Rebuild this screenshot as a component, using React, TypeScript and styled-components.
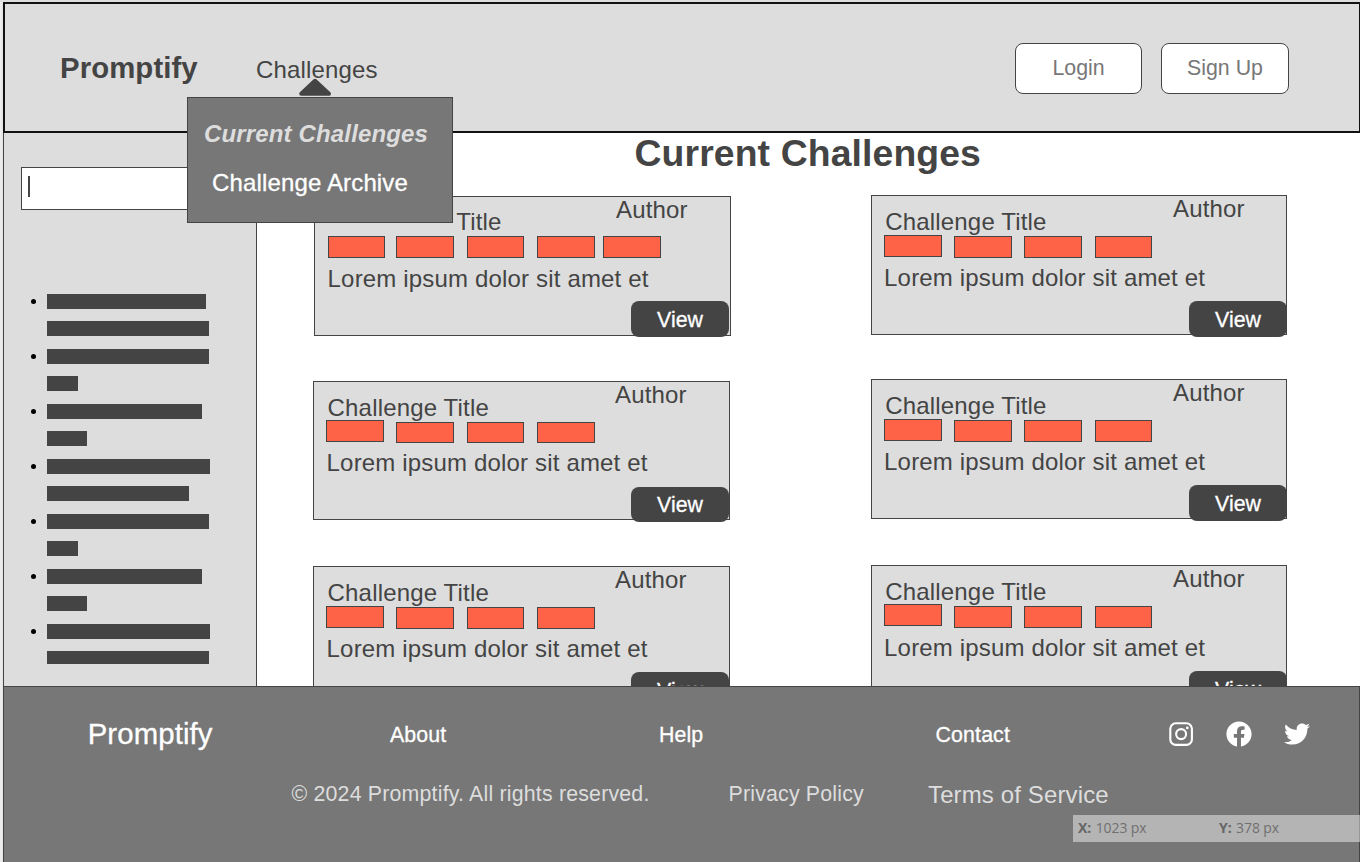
import React from "react";
import styled, { createGlobalStyle } from "styled-components";
import { FaFacebook, FaTwitter } from "react-icons/fa";

const ink = "#444444";
const panel = "#dddddd";
const slate = "#777777";

const GlobalStyle = createGlobalStyle`
  * { box-sizing: border-box; }
  html, body { margin: 0; padding: 0; overflow: hidden; background: #ffffff; }
  body { font-family: "Liberation Sans", Arial, sans-serif; color: ${ink}; }
`;

const Page = styled.div`
  width: 1360px;
  height: 862px;
  display: flex;
  flex-direction: column;
  overflow: hidden;
  padding: 2px 0 0 3px;
  background: linear-gradient(to bottom, ${panel} 2px, transparent 2px),
    linear-gradient(to right, #efefef, #e2e2e2 3px, #ffffff 3px);
`;

const Header = styled.header`
  flex: none;
  width: 1358px;
  height: 131px;
  display: flex;
  align-items: flex-start;
  border: 2px solid #111111;
  background: ${panel};
`;

const Brand = styled.div`
  width: 196px;
  padding: 47px 0 0 55px;
  font-size: 29.33px;
  line-height: 34px;
  letter-spacing: 0.1px;
  font-weight: 700;
  white-space: nowrap;
`;

const NavItem = styled.div`
  position: relative;
  flex: 1;
  padding: 52px 0 0 55px;
  font-size: 24px;
  line-height: 28px;
  letter-spacing: 0.15px;
`;

const Caret = styled.svg`
  position: absolute;
  left: 97px;
  top: 74px;
  z-index: 3;
`;

const Menu = styled.nav`
  position: absolute;
  z-index: 2;
  left: -14px;
  top: 93px;
  width: 266px;
  height: 126px;
  display: flex;
  flex-direction: column;
  gap: 21px;
  padding: 22px 0 0 16px;
  border: 1px solid ${ink};
  background: ${slate};
  white-space: nowrap;
`;

const MenuLink = styled.a<{ $active?: boolean }>`
  padding-left: ${(p) => (p.$active ? 0 : 8)}px;
  font-size: 24px;
  line-height: 28px;
  font-weight: ${(p) => (p.$active ? 700 : 400)};
  font-style: ${(p) => (p.$active ? "italic" : "normal")};
  color: ${(p) => (p.$active ? panel : "#ffffff")};
  -webkit-text-stroke: ${(p) => (p.$active ? 0 : 0.3)}px;
`;

const AuthButton = styled.button<{ $width: number; $right: number }>`
  width: ${(p) => p.$width}px;
  height: 51px;
  margin: 39px ${(p) => p.$right}px 0 0;
  padding: 0 0 1px;
  border: 1px solid ${ink};
  border-radius: 8px;
  background: #ffffff;
  color: ${slate};
  font: 21.33px "Liberation Sans", Arial, sans-serif;
`;

const Main = styled.div`
  flex: none;
  height: 553px;
  display: flex;
  overflow: hidden;
`;

const Sidebar = styled.aside`
  flex: none;
  width: 254px;
  padding: 34px 0 0 17px;
  border: solid ${ink};
  border-width: 0 1px;
  background: ${panel};
`;

const Search = styled.div`
  width: 214px;
  height: 43px;
  padding: 8px 0 0 6px;
  border: 1px solid ${ink};
  background: #ffffff;
`;

const TextCursor = styled.div`
  width: 2px;
  height: 21px;
  background: ${ink};
`;

const List = styled.ul`
  list-style: none;
  margin: 84px 0 0;
  padding: 0;
`;

const Item = styled.li`
  display: flex;
  gap: 11px;
  height: 55px;
  padding-left: 10px;
`;

const Bullet = styled.span`
  width: 5px;
  height: 5px;
  margin-top: 5px;
  border-radius: 50%;
  background: #000000;
`;

const Lines = styled.div`
  display: flex;
  flex-direction: column;
  gap: 12px;
`;

const Line = styled.div<{ $w: number; $h: number }>`
  width: ${(p) => p.$w}px;
  height: ${(p) => p.$h}px;
  background: ${ink};
`;

const Content = styled.main`
  flex: none;
  width: 1103px;
  display: flex;
  flex-direction: column;
`;

const Title = styled.h1`
  flex: none;
  margin: 0;
  padding: 0 0 0 377.5px;
  height: 62px;
  font-size: 37.33px;
  line-height: 40px;
  letter-spacing: 0.12px;
  font-weight: 700;
  white-space: nowrap;
`;

const Columns = styled.div`
  display: flex;
  align-items: flex-start;
  gap: 141px;
  padding-left: 56px;
`;

const Column = styled.div`
  width: 417px;
  display: flex;
  flex-direction: column;
`;

const CardBox = styled.article<{ $w: number; $h: number; $top: number; $left: number }>`
  flex: none;
  width: ${(p) => p.$w}px;
  height: ${(p) => p.$h}px;
  margin: ${(p) => p.$top}px 0 0 ${(p) => p.$left}px;
  display: flex;
  flex-direction: column;
  border: 1px solid ${ink};
  background: ${panel};
  font-size: 24px;
  line-height: 28px;
  letter-spacing: 0.17px;
  white-space: nowrap;
`;

const CardHead = styled.div<{ $indent: number; $titleTop: number }>`
  flex: none;
  display: flex;
  height: 39px;
  padding-left: ${(p) => p.$indent}px;

  & > h2 {
    width: ${(p) => 301 - p.$indent}px;
    margin: ${(p) => p.$titleTop}px 0 0;
    font-size: inherit;
    font-weight: 400;
  }
`;

const Author = styled.span`
  height: 28px;
  line-height: 26px;
`;

const TagRow = styled.div`
  flex: none;
  display: flex;
  height: 24px;
`;

const Tag = styled.span<{ $w: number; $h: number; $left: number; $top: number }>`
  flex: none;
  width: ${(p) => p.$w}px;
  height: ${(p) => p.$h}px;
  margin: ${(p) => p.$top}px 0 0 ${(p) => p.$left}px;
  border: 1px solid ${ink};
  background: #ff6347;
`;

const Summary = styled.p<{ $indent: number; $top: number }>`
  flex: none;
  margin: ${(p) => p.$top}px 0 0;
  padding-left: ${(p) => p.$indent}px;
`;

const ViewButton = styled.button<{ $h: number; $right: number; $drop: number }>`
  flex: none;
  align-self: flex-end;
  width: 98px;
  height: ${(p) => p.$h}px;
  margin: auto ${(p) => p.$right}px ${(p) => -p.$drop}px 0;
  padding: 2px 0 0;
  border: 0;
  border-radius: 8px;
  background: ${ink};
  color: #ffffff;
  font: 21.33px "Liberation Sans", Arial, sans-serif;
  -webkit-text-stroke: 0.3px;
`;

const Footer = styled.footer`
  position: relative;
  flex: none;
  width: 1357px;
  height: 190px;
  border: 1px solid ${ink};
  background: ${slate};
  color: #ffffff;
  white-space: nowrap;
`;

const FooterRow = styled.div<{ $h: number; $muted?: boolean }>`
  display: flex;
  align-items: flex-start;
  height: ${(p) => p.$h}px;
  color: ${(p) => (p.$muted ? panel : "#ffffff")};
  letter-spacing: ${(p) => (p.$muted ? 0.19 : 0.12)}px;
  -webkit-text-stroke: ${(p) => (p.$muted ? 0 : 0.3)}px;
`;

const FooterText = styled.a<{ $size: number; $w: number; $top: number; $left?: number }>`
  flex: none;
  width: ${(p) => p.$w}px;
  padding: ${(p) => p.$top}px 0 0 ${(p) => p.$left ?? 0}px;
  font-size: ${(p) => p.$size}px;
  line-height: 28px;
`;

const TermsText = styled(FooterText)`
  letter-spacing: 0.13px;
`;

const Socials = styled.div`
  display: flex;
  align-items: center;
  gap: 32.6px;
  padding-top: 34px;

  svg { display: block; }
`;

const Coordinates = styled.div`
  position: absolute;
  right: -2px;
  top: 128px;
  width: 288px;
  height: 27px;
  display: flex;
  padding-left: 5px;
  background: rgba(255, 255, 255, 0.45);
  color: #707070;
  font-family: "Open Sans", sans-serif;
  font-size: 14px;
  line-height: 26px;
  letter-spacing: -0.1px;

  & > span { width: 141px; }
  b { margin-right: 1px; color: #666666; }
`;

const Instagram = () => (
  <svg width="24" height="24" viewBox="0 0 24 24" fill="none" stroke="#ffffff">
    <rect x="1.3" y="1.3" width="21.6" height="21.6" rx="5.5" strokeWidth="2.1" />
    <circle cx="12.1" cy="12.1" r="5" strokeWidth="2.1" />
    <circle cx="18.3" cy="5.9" r="1.4" fill="#ffffff" stroke="none" />
  </svg>
);

const listLines: number[][] = [
  [159, 162], [162, 31], [155, 40], [163, 142], [162, 31], [155, 40], [163, 162],
];

type TagSpec = [left: number, width: number];

interface CardSpec {
  title: string;
  w: number; h: number; top: number; left: number;
  indent: number; titleTop: number;
  tags: TagSpec[]; firstTop: number; tagTop: number; tagH: number;
  textIndent: number; textTop: number;
  viewH: number; viewRight: number; viewDrop: number;
}

const leftTags: TagSpec[] = [[12, 58], [12, 58], [13, 57], [13, 58]];
const rightTags: TagSpec[] = [[12, 58], [12, 58], [12, 58], [13, 57]];

const leftCards: CardSpec[] = [
  { title: "Title", w: 417, h: 140, top: 1, left: 1, indent: 141.3, titleTop: 11,
    tags: [[13, 57], [11, 58], [13, 57], [13, 58], [8, 58]], firstTop: 0, tagTop: 0, tagH: 22,
    textIndent: 12.6, textTop: 5, viewH: 36, viewRight: 1, viewDrop: 2 },
  { title: "Challenge Title", w: 417, h: 139, top: 45, left: 0, indent: 13.6, titleTop: 12,
    tags: leftTags, firstTop: -1, tagTop: 1, tagH: 21,
    textIndent: 12.6, textTop: 4, viewH: 35, viewRight: 0, viewDrop: 3 },
  { title: "Challenge Title", w: 417, h: 140, top: 46, left: 0, indent: 13.6, titleTop: 12,
    tags: leftTags, firstTop: 0, tagTop: 1, tagH: 22,
    textIndent: 12.6, textTop: 5, viewH: 36, viewRight: 0, viewDrop: 3 },
];

const rightCards: CardSpec[] = [
  { title: "Challenge Title", w: 416, h: 140, top: 0, left: 0, indent: 13.3, titleTop: 12,
    tags: rightTags, firstTop: 0, tagTop: 1, tagH: 22,
    textIndent: 12.1, textTop: 5, viewH: 36, viewRight: -1, viewDrop: 3 },
  { title: "Challenge Title", w: 416, h: 140, top: 44, left: 0, indent: 13.3, titleTop: 12,
    tags: rightTags, firstTop: 0, tagTop: 1, tagH: 22,
    textIndent: 12.1, textTop: 5, viewH: 36, viewRight: -1, viewDrop: 3 },
  { title: "Challenge Title", w: 416, h: 140, top: 46, left: 0, indent: 13.3, titleTop: 12,
    tags: rightTags, firstTop: -1, tagTop: 1, tagH: 22,
    textIndent: 12.1, textTop: 5, viewH: 36, viewRight: -1, viewDrop: 3 },
];

const Card = ({ c }: { c: CardSpec }) => (
  <CardBox $w={c.w} $h={c.h} $top={c.top} $left={c.left}>
    <CardHead $indent={c.indent} $titleTop={c.titleTop}>
      <h2>{c.title}</h2>
      <Author>Author</Author>
    </CardHead>
    <TagRow>
      {c.tags.map(([left, width], i) => (
        <Tag key={i} $w={width} $left={left} $h={i === 0 ? 22 : c.tagH} $top={i === 0 ? c.firstTop : c.tagTop} />
      ))}
    </TagRow>
    <Summary $indent={c.textIndent} $top={c.textTop}>Lorem ipsum dolor sit amet et</Summary>
    <ViewButton $h={c.viewH} $right={c.viewRight} $drop={c.viewDrop}>View</ViewButton>
  </CardBox>
);

export default function App() {
  return (
    <Page>
      <GlobalStyle />
      <Header>
        <Brand>Promptify</Brand>
        <NavItem>
          Challenges
          <Caret width="34" height="19" viewBox="0 0 34 19">
            <path d="M17 2.8 L31 15.8 H3.2 Z" fill={ink} stroke={ink} strokeWidth="4" strokeLinejoin="round" />
          </Caret>
          <Menu>
            <MenuLink $active>Current Challenges</MenuLink>
            <MenuLink>Challenge Archive</MenuLink>
          </Menu>
        </NavItem>
        <AuthButton $width={127} $right={19}>Login</AuthButton>
        <AuthButton $width={128} $right={70}>Sign Up</AuthButton>
      </Header>
      <Main>
        <Sidebar>
          <Search><TextCursor /></Search>
          <List>
            {listLines.map((widths, row) => (
              <Item key={row}>
                <Bullet />
                <Lines>
                  {widths.map((w, i) => (
                    <Line key={i} $w={w} $h={row === 6 && i === 1 ? 13 : 15} />
                  ))}
                </Lines>
              </Item>
            ))}
          </List>
        </Sidebar>
        <Content>
          <Title>Current Challenges</Title>
          <Columns>
            <Column>{leftCards.map((c, i) => <Card key={i} c={c} />)}</Column>
            <Column>{rightCards.map((c, i) => <Card key={i} c={c} />)}</Column>
          </Columns>
        </Content>
      </Main>
      <Footer>
        <FooterRow $h={92}>
          <FooterText $size={29.33} $w={386} $left={83.7} $top={33}>Promptify</FooterText>
          <FooterText $size={21.33} $w={269} $top={34}>About</FooterText>
          <FooterText $size={21.33} $w={276} $top={34}>Help</FooterText>
          <FooterText $size={21.33} $w={234} $top={34} $left={0.6}>Contact</FooterText>
          <Socials>
            <Instagram />
            <FaFacebook size={26} color="#ffffff" />
            <FaTwitter size={26} color="#ffffff" />
          </Socials>
        </FooterRow>
        <FooterRow $h={40} $muted>
          <FooterText $size={21.33} $w={724.5} $left={287.5} $top={1}>© 2024 Promptify. All rights reserved.</FooterText>
          <FooterText $size={21.33} $w={199.5} $top={1}>Privacy Policy</FooterText>
          <TermsText $size={24} $w={200} $top={2}>Terms of Service</TermsText>
        </FooterRow>
        <Coordinates>
          <span><b>X:</b> 1023 px</span>
          <span><b>Y:</b> 378 px</span>
        </Coordinates>
      </Footer>
    </Page>
  );
}
